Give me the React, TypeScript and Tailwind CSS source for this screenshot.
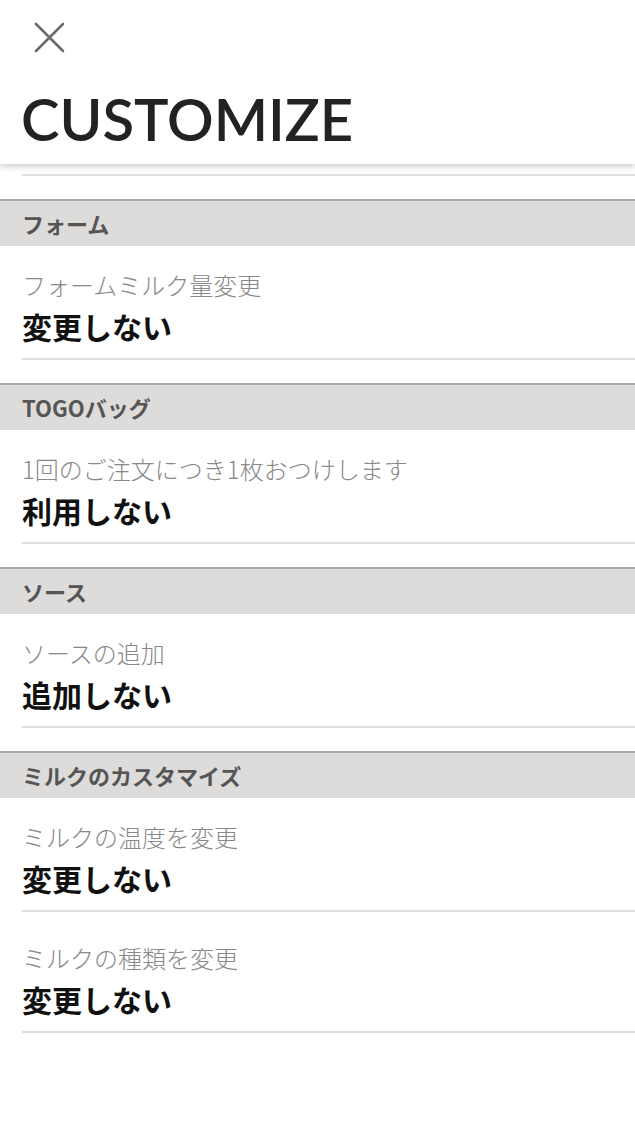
type Row = { label: string; value: string };
type Section = { title: string; rows: Row[] };

const sections: Section[] = [
  { title: "フォーム", rows: [{ label: "フォームミルク量変更", value: "変更しない" }] },
  { title: "TOGOバッグ", rows: [{ label: "1回のご注文につき1枚おつけします", value: "利用しない" }] },
  { title: "ソース", rows: [{ label: "ソースの追加", value: "追加しない" }] },
  {
    title: "ミルクのカスタマイズ",
    rows: [
      { label: "ミルクの温度を変更", value: "変更しない" },
      { label: "ミルクの種類を変更", value: "変更しない" },
    ],
  },
];

const jp = "font-['Noto_Sans_CJK_JP','Noto_Sans',sans-serif]";

export default function App() {
  return (
    <div className={`min-h-[1129px] w-[635px] bg-white ${jp}`}>
      {/* ヘッダー */}
      <header className="relative z-10 h-[164px] bg-white shadow-[0_3px_6px_rgba(0,0,0,0.18)]">
        <button className="ml-[34px] pt-[22px] text-[#6b6b6b]">
          <svg width="31" height="31" viewBox="0 0 31 31" fill="none" stroke="currentColor" strokeWidth="2.6" strokeLinecap="round">
            <path d="M2 2 L29 29 M29 2 L2 29" />
          </svg>
        </button>
        <h1 className="ml-[21px] mt-[32px] font-['Lato',sans-serif] text-[58px] font-semibold leading-none text-[#222]">
          CUSTOMIZE
        </h1>
      </header>

      {/* 前のセクションの区切り線 */}
      <div className="ml-[22px] h-[12px] border-b-2 border-[#dedede]" />

      {sections.map((s) => (
        <section key={s.title} className="mt-[23px]">
          <div className="flex h-[47px] items-center border-t-2 border-[#aaa9a7] bg-[#dddcdb] px-[22px] text-[22px] font-bold text-[#555]">
            {s.title}
          </div>
          {s.rows.map((r, i) => (
            <div
              key={r.label}
              className={`ml-[22px] border-b-2 border-[#dedede] pb-[12px] ${i === 0 ? "pt-[23px]" : "pt-[30px]"}`}
            >
              <p className="text-[24px] font-light leading-[32px] text-[#888]">{r.label}</p>
              <p className="mt-[5px] text-[30px] font-bold leading-[40px] text-[#111]">{r.value}</p>
            </div>
          ))}
        </section>
      ))}
    </div>
  );
}
